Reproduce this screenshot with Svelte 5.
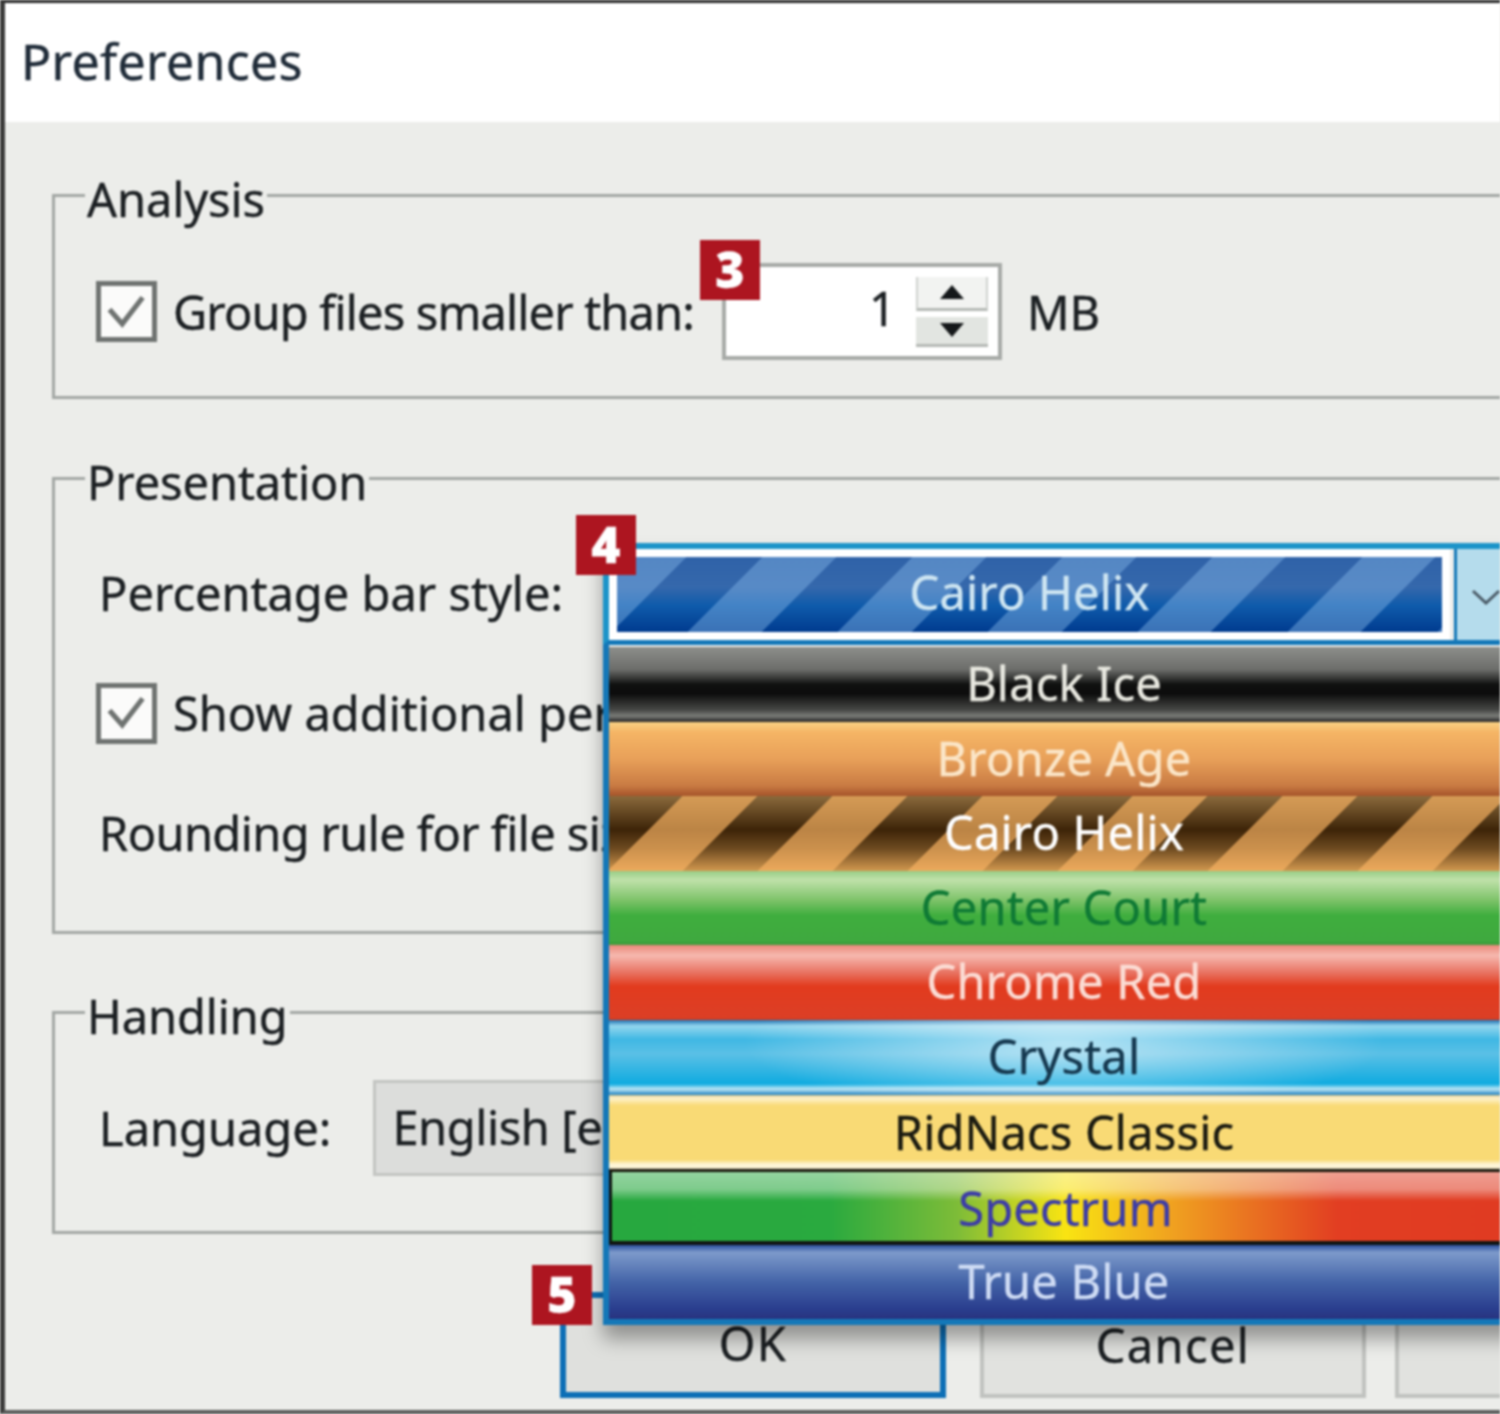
<script>
	const styles = [
		{ name: 'Black Ice', cls: 'black-ice' },
		{ name: 'Bronze Age', cls: 'bronze' },
		{ name: 'Cairo Helix', cls: 'cairo' },
		{ name: 'Center Court', cls: 'court' },
		{ name: 'Chrome Red', cls: 'red' },
		{ name: 'Crystal', cls: 'crystal' },
		{ name: 'RidNacs Classic', cls: 'classic' },
		{ name: 'Spectrum', cls: 'spectrum' },
		{ name: 'True Blue', cls: 'true-blue' }
	];
</script>

{#snippet check()}
	<span class="check">
		<svg viewBox="0 0 60 60" width="60" height="60" aria-hidden="true">
			<path d="M10 27 L25 44 L49 13" fill="none" stroke="#6f7371" stroke-width="6" />
		</svg>
	</span>
{/snippet}

<div class="window">
	<header class="title">Preferences</header>

	<main class="body">
		<fieldset class="group analysis">
			<legend>Analysis</legend>
			<div class="row">
				{@render check()}
				<span class="label after-check tight">Group files smaller than:</span>
				<div class="spin">
					<span class="value">1</span>
					<div class="spin-btns">
						<span class="up"><svg viewBox="0 0 26 16" width="26" height="16"><path d="M13 1 L25 15 L1 15 Z" /></svg></span>
						<span class="down"><svg viewBox="0 0 26 14" width="26" height="14"><path d="M1 0 L25 0 L13 14 Z" /></svg></span>
					</div>
				</div>
				<span class="label unit">MB</span>
			</div>
		</fieldset>

		<fieldset class="group presentation">
			<legend>Presentation</legend>
			<div class="rows">
				<div class="row plain"><span class="label">Percentage bar style:</span></div>
				<div class="row">
					{@render check()}
					<span class="label after-check">Show additional percentage</span>
				</div>
				<div class="row plain"><span class="label mid">Rounding rule for file sizes</span></div>
			</div>
		</fieldset>

		<fieldset class="group handling">
			<legend>Handling</legend>
			<div class="row plain">
				<span class="label">Language:</span>
				<div class="select">English [en]</div>
			</div>
		</fieldset>

		<div class="buttons">
			<div class="btn default">OK</div>
			<div class="btn">Cancel</div>
			<div class="btn last"></div>
		</div>
	</main>

	<div class="combo">
		<div class="combo-head">
			<div class="combo-field"><div class="bar selected">Cairo Helix</div></div>
			<div class="combo-arrow">
				<svg viewBox="0 0 30 16" width="30" height="16"><path d="M2 2 L15 14 L28 2" fill="none" stroke="#4a5a66" stroke-width="3" /></svg>
			</div>
		</div>
		<ul class="list">
			{#each styles as s}
				<li class="item {s.cls}">{s.name}</li>
			{/each}
		</ul>
	</div>

	<span class="badge b3">3</span>
	<span class="badge b4">4</span>
	<span class="badge b5">5</span>
</div>

<style>
	:global(body) {
		margin: 0;
		background: #ecedea;
	}

	.window {
		position: relative;
		width: 1500px;
		height: 1414px;
		box-sizing: border-box;
		overflow: hidden;
		border-left: 5px solid #3b3b3a;
		border-top: 3px solid #2a2a2a;
		border-bottom: 4px solid #5b5c5b;
		background: #ecedea;
		color: #1b1f22;
		font-family: 'Noto Sans', 'Open Sans', sans-serif;
		font-size: 47px;
		-webkit-text-stroke: 0.4px;
		filter: blur(1px);
	}

	.title {
		height: 119px;
		background: #fff;
		display: flex;
		align-items: center;
		padding: 0 0 4px 16px;
		box-sizing: border-box;
		font-size: 50px;
		letter-spacing: 0.3px;
		color: #1f2b38;
	}

	.body {
		padding: 48px 0 0 47px;
		width: 1600px;
	}

	/* group boxes run off the right side of the crop */
	.group {
		margin: 0;
		padding: 0 0 0 41px;
		border: 3px solid #a3a7a4;
		box-sizing: border-box;
		min-width: 0;
	}

	legend {
		margin-left: -11px;
		padding: 8px 2px 0;
		line-height: 42px;
		letter-spacing: -0.1px;
		font-size: 47px;
	}

	.analysis {
		height: 229px;
		padding-top: 43px;
	}

	.presentation {
		height: 481px;
		margin-top: 54px;
		padding-top: 60px;
	}

	.handling {
		height: 247px;
		margin-top: 53px;
		padding-top: 42px;
	}

	.rows {
		display: grid;
		grid-template-rows: 60px 60px 60px;
		row-gap: 60px;
	}

	.row {
		display: flex;
		align-items: center;
		height: 97px;
	}

	.rows .row {
		height: 60px;
	}

	.check {
		width: 61px;
		height: 61px;
		box-sizing: border-box;
		border: 5px solid #6f7371;
		background: #fbfbfa;
		flex: none;
		display: flex;
		align-items: center;
		justify-content: center;
		overflow: hidden;
	}

	.label {
		white-space: nowrap;
		letter-spacing: 0;
	}

	.label.tight {
		letter-spacing: -0.85px;
	}

	.label.mid {
		letter-spacing: -0.6px;
	}

	.after-check {
		margin-left: 16px;
	}

	.plain .label {
		margin-left: 3px;
	}

	.spin {
		margin-left: 28px;
		width: 280px;
		height: 97px;
		box-sizing: border-box;
		border: 4px solid #a7aaa7;
		background: #fff;
		display: flex;
		align-items: center;
		justify-content: flex-end;
		padding-right: 10px;
	}

	.value {
		margin-right: 20px;
		margin-top: -8px;
	}

	.spin-btns {
		display: flex;
		flex-direction: column;
		gap: 6px;
		width: 72px;
	}

	.spin-btns span {
		display: flex;
		align-items: center;
		justify-content: center;
		box-sizing: border-box;
	}

	.up {
		height: 34px;
		border: 2px solid #cfd3cf;
		border-top: none;
		border-bottom: 3px solid #b5b9b5;
		background: #f2f3f1;
	}

	.down {
		height: 30px;
		background: #e2e5e1;
		border-bottom: 3px solid #b5b9b5;
	}

	.spin-btns path {
		fill: #15181a;
	}

	.unit {
		margin-left: 25px;
		letter-spacing: 0;
	}

	.select {
		margin-left: 42px;
		width: 500px;
		height: 96px;
		box-sizing: border-box;
		padding: 0 0 2px 16px;
		display: flex;
		align-items: center;
		background: #dcdddb;
		border: 3px solid #c3c5c2;
		letter-spacing: -0.4px;
	}

	.buttons {
		display: flex;
		gap: 34px;
		margin: 58px 0 0 508px;
	}

	.btn {
		flex: none;
		width: 386px;
		height: 106px;
		box-sizing: border-box;
		border: 4px solid #c0c2bf;
		background: #e1e2df;
		display: flex;
		align-items: flex-end;
		justify-content: center;
		padding-bottom: 17px;
		letter-spacing: 1.4px;
	}

	.btn.default {
		border: 6px solid #0d6fb6;
		background: #dfe0dd;
	}

	.btn.last {
		margin-left: -5px;
	}

	.combo {
		position: absolute;
		left: 598px;
		top: 540px;
		width: 916px;
		box-sizing: border-box;
		border: 6px solid #1478b8;
		border-top: none;
		border-right: none;
		box-shadow: 0 14px 18px rgba(0, 0, 0, 0.35);
		text-align: center;
		font-size: 47px;
		letter-spacing: 0.2px;
	}

	.combo-head {
		display: flex;
		height: 102px;
		margin-left: -6px;
		box-sizing: border-box;
		border-top: 6px solid #1c94c9;
		border-bottom: 5px solid #1478b8;
		border-left: 6px solid #1c94c9;
	}

	.combo-field {
		width: 841px;
		flex: none;
		box-sizing: border-box;
		padding: 8px;
		background: #fff;
	}

	.bar {
		height: 75px;
		line-height: 70px;
	}

	.selected {
		color: #cfe6f2;
		background:
			repeating-linear-gradient(135deg,
				rgba(130, 180, 230, 0.45) 0 49px,
				transparent 49px 103px,
				rgba(130, 180, 230, 0.45) 103px 106px),
			linear-gradient(#2f62a8, #3568ac 40%, #0f5bab 65%, #003b8f);
	}

	.combo-arrow {
		flex: 1;
		display: flex;
		align-items: flex-start;
		margin-left: 4px;
		border-left: 3px solid #1478b8;
		background: #b5dcec;
		padding: 40px 0 0 14px;
		box-sizing: border-box;
	}

	.list {
		list-style: none;
		margin: 0;
		padding: 0;
	}

	.item {
		height: 74.6px;
		line-height: 72px;
		box-sizing: border-box;
	}

	.black-ice {
		color: #e8e8e0;
		margin-top: 2px;
		background: linear-gradient(#8d8f8b, #6c6d6a 30%, #101110 50%, #0c0c0c 62%, #474846 84%, #7a7c78 92%, #222 100%);
	}

	.bronze {
		color: #fbe6c8;
		background: linear-gradient(#f9d184, #f5b565 14%, #e8a059 50%, #c97b43 86%, #a5532a 100%);
	}

	.cairo {
		color: #fff;
		background:
			repeating-linear-gradient(135deg,
				transparent 0 52px,
				rgba(248, 178, 98, 0.68) 52px 105px,
				transparent 105px 106px),
			linear-gradient(#8b6a3c, #3d2408 45%, #6d4a20 70%, #d2984f);
	}

	.court {
		color: #0f7a35;
		background: linear-gradient(#98cd86, #c0e1aa 12%, #7cc268 40%, #3fae3e 60%, #3fa93f 94%, #3d9a3c);
	}

	.red {
		color: #fbdcd4;
		background: linear-gradient(#e98878, #f6b8af 14%, #e97565 36%, #e23b1e 55%, #dc3f26 97%, #c9391f);
	}

	.crystal {
		color: #15384f;
		background:
			radial-gradient(ellipse 320px 70px at 50% 30%, rgba(255, 255, 255, 0.6), transparent),
			linear-gradient(#1f6fb0, #93d6ee 8%, #3fb8e4 26%, #5bc0e6 45%, #0fabe0 85%, #bfe7f5 92%, #1b7fc0 100%);
	}

	.classic {
		height: 77px;
		line-height: 74px;
		color: #1a1a10;
		background: linear-gradient(#d9c48a, #fff3cd 4%, #f9da75 14%, #f9da75 84%, #fff5d6 90%, #fff5d6 95%, #141208 97%);
	}

	.spectrum {
		height: 73px;
		color: #3c3ca8;
		border-left: 3px solid #101410;
		border-bottom: 4px solid #101410;
		background:
			linear-gradient(rgba(255, 255, 255, 0.5), rgba(255, 255, 255, 0.4) 25%, transparent 42%),
			linear-gradient(90deg, #27a83f 0, #2aaa3f 24%, #7dbc38 38%, #f9e412 50%, #f0a020 62%, #e23e22 80%, #e03b22 100%);
	}

	.true-blue {
		color: #cfdcf4;
		background: linear-gradient(#2a4f9c, #7d9acb 10%, #4464a8 50%, #2a3e8e 86%, #28337f);
	}

	.badge {
		position: absolute;
		width: 60px;
		height: 60px;
		background: #ad1520;
		color: #fff;
		font-family: 'Open Sans', sans-serif;
		font-size: 50px;
		font-weight: 800;
		line-height: 58px;
		text-align: center;
	}

	.b3 {
		left: 695px;
		top: 237px;
	}

	.b4 {
		left: 571px;
		top: 512px;
	}

	.b5 {
		left: 527px;
		top: 1262px;
	}
</style>
